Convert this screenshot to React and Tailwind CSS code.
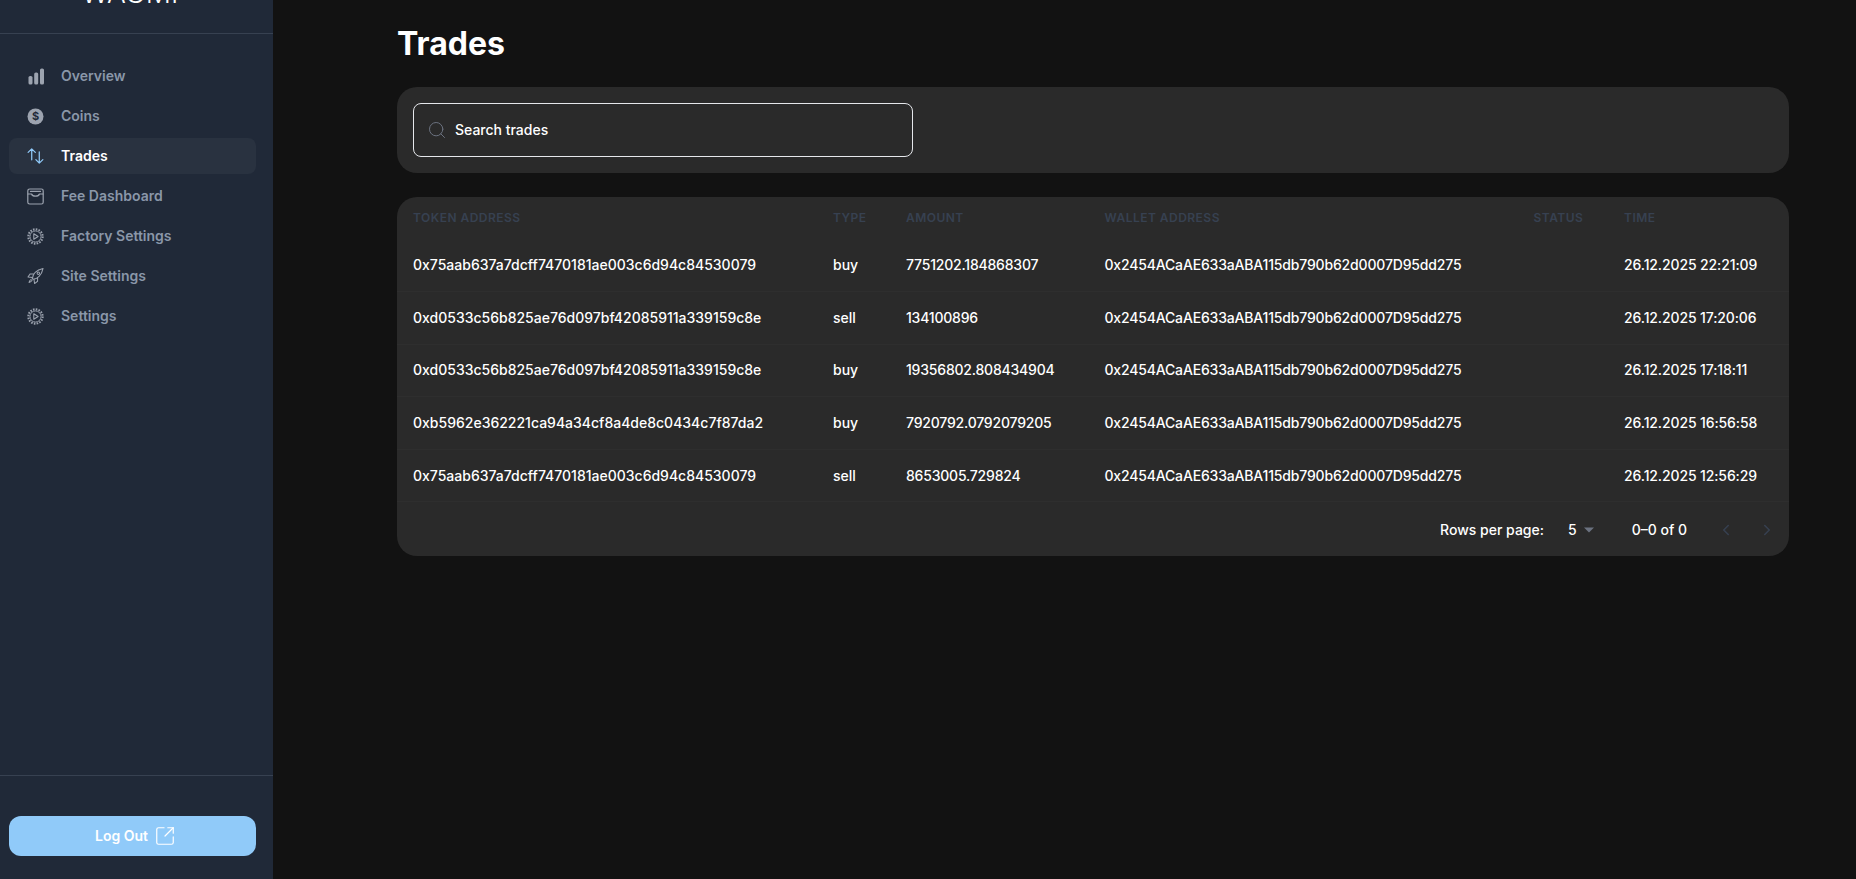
import { Search, SquareArrowOutUpRight, ChevronLeft, ChevronRight } from "lucide-react";

const BarsIcon = () => (
  <svg width="16" height="17" viewBox="0 0 16 17" fill="currentColor">
    <rect x="0.5" y="8" width="4" height="8.5" rx="1.6" />
    <rect x="6.2" y="4.5" width="4" height="12" rx="1.6" />
    <rect x="12" y="0.5" width="4" height="16" rx="1.6" />
  </svg>
);

const CoinIcon = () => (
  <svg width="17" height="17" viewBox="0 0 17 17">
    <circle cx="8.5" cy="8.5" r="8" fill="currentColor" />
    <text x="8.5" y="12.4" textAnchor="middle" fontSize="11" fontWeight="700" fill="#202938" fontFamily="Inter, sans-serif">$</text>
  </svg>
);

const TradesIcon = () => (
  <svg width="18" height="18" viewBox="0 0 18 18" fill="none" stroke="currentColor" strokeWidth="1.3" strokeLinecap="round" strokeLinejoin="round">
    <path d="M5 13V1.5M1.2 5.2 5 1.5l3.8 3.7" />
    <path d="M13 4.5V16.5M9.4 12.8l3.6 3.7 3.8-3.7" />
  </svg>
);

const WalletIcon = () => (
  <svg width="17" height="17" viewBox="0 0 17 17" fill="none" stroke="currentColor" strokeWidth="1.2" strokeLinejoin="round" strokeLinecap="round">
    <rect x="0.8" y="1" width="15.4" height="15" rx="1.8" />
    <path d="M3.5 3.4h10" />
    <path d="M1 6h3.6c.4 1.4 1.7 2.2 3.9 2.2s3.5-.8 3.9-2.2H16" />
  </svg>
);

const GearPlayIcon = () => (
  <svg width="17" height="17" viewBox="0 0 17 17" fill="none" stroke="currentColor" strokeLinejoin="round">
    <circle cx="8.5" cy="8.5" r="7.2" strokeWidth="2" strokeDasharray="1.6 1.23" />
    <circle cx="8.5" cy="8.5" r="5.6" strokeWidth="1" />
    <path d="M6.8 5.8v5.4l4.3-2.7z" strokeWidth="1.1" />
  </svg>
);

const RocketIcon = () => (
  <svg width="18" height="18" viewBox="0 0 18 18" fill="none" stroke="currentColor" strokeWidth="1.1" strokeLinejoin="round" strokeLinecap="round">
    <path d="M5.6 11.9C6 7.6 9.6 2.8 17 1c-1.4 7.4-6.2 11-10.5 11.4z" />
    <path d="M7 6.8H3.4L1 10l4.6.6" />
    <path d="M11.2 11v3.6L8 17l-.6-4.6" />
    <path d="M4.4 12.6c-1.2.7-2 2-2.2 3.2 1.2-.2 2.5-1 3.2-2.2" />
    <circle cx="12" cy="6" r="1.3" />
  </svg>
);

const navItems = [
  { label: "Overview", icon: <BarsIcon /> },
  { label: "Coins", icon: <CoinIcon /> },
  { label: "Trades", icon: <TradesIcon />, active: true },
  { label: "Fee Dashboard", icon: <WalletIcon /> },
  { label: "Factory Settings", icon: <GearPlayIcon /> },
  { label: "Site Settings", icon: <RocketIcon /> },
  { label: "Settings", icon: <GearPlayIcon /> },
];

const trades = [
  ["0x75aab637a7dcff7470181ae003c6d94c84530079", "buy", "7751202.184868307", "26.12.2025 22:21:09"],
  ["0xd0533c56b825ae76d097bf42085911a339159c8e", "sell", "134100896", "26.12.2025 17:20:06"],
  ["0xd0533c56b825ae76d097bf42085911a339159c8e", "buy", "19356802.808434904", "26.12.2025 17:18:11"],
  ["0xb5962e362221ca94a34cf8a4de8c0434c7f87da2", "buy", "7920792.0792079205", "26.12.2025 16:56:58"],
  ["0x75aab637a7dcff7470181ae003c6d94c84530079", "sell", "8653005.729824", "26.12.2025 12:56:29"],
];

const wallet = "0x2454ACaAE633aABA115db790b62d0007D95dd275";

const Sidebar = () => (
  <aside className="flex h-screen w-[273px] shrink-0 flex-col bg-[#202938]">
    <div className="flex h-[34px] items-end justify-center overflow-hidden border-b border-[#374151] pr-[13px]">
      <div className="mb-[26px] text-[28px] font-light leading-none text-white">WAGMI</div>
    </div>
    <nav className="flex flex-col gap-1 pl-[9px] pr-[17px] pt-[24px]">
      {navItems.map((item) => (
        <a
          key={item.label}
          className={`flex h-9 items-center gap-[17px] rounded-lg pl-[18px] text-sm font-semibold ${
            item.active ? "bg-[#293240] text-white" : "text-[#8a97a9]"
          }`}
        >
          <span className={`flex w-[17px] items-center justify-center ${item.active ? "text-[#90caf9]" : "text-[#9ca3af]"}`}>
            {item.icon}
          </span>
          {item.label}
        </a>
      ))}
    </nav>
    <div className="mt-auto border-t border-[#374151] pb-[23px] pl-[9px] pr-[17px] pt-[40px]">
      <button className="flex h-10 w-full items-center justify-center gap-[6px] rounded-xl bg-[#90caf9] pl-[6px] text-sm font-semibold text-white">
        Log Out
        <SquareArrowOutUpRight size={22} strokeWidth={1.3} />
      </button>
    </div>
  </aside>
);

const Th = ({ children }) => (
  <th className="h-[42px] px-4 text-left text-xs font-semibold uppercase tracking-[0.04em] text-[#374151]">{children}</th>
);

const TradesTable = () => (
  <div className="mt-6 rounded-[20px] bg-[#2a2a2a]">
    <table className="w-full table-fixed border-collapse">
      <colgroup>
        <col className="w-[420px]" />
        <col className="w-[73px]" />
        <col className="w-[198.5px]" />
        <col className="w-[429px]" />
        <col className="w-[90.5px]" />
        <col className="w-[181px]" />
      </colgroup>
      <thead>
        <tr>
          <Th>Token Address</Th>
          <Th>Type</Th>
          <Th>Amount</Th>
          <Th>Wallet Address</Th>
          <Th>Status</Th>
          <Th>Time</Th>
        </tr>
      </thead>
      <tbody>
        {trades.map((row, i) => (
          <tr key={i} className="h-[52.6px] border-b border-[#2e2e2e] text-sm font-medium text-white">
            <td className="whitespace-nowrap px-4">{row[0]}</td>
            <td className="px-4">{row[1]}</td>
            <td className="whitespace-nowrap px-4 tracking-[-0.2px]">{row[2]}</td>
            <td className="whitespace-nowrap px-4 tracking-[-0.17px]">{wallet}</td>
            <td className="px-4"></td>
            <td className="whitespace-nowrap px-4 tracking-[-0.12px]">{row[3]}</td>
          </tr>
        ))}
      </tbody>
    </table>
    <div className="flex h-[54px] items-center justify-end pt-[2px] text-sm font-medium text-white">
      <span>Rows per page:</span>
      <span className="ml-6">5</span>
      <svg className="ml-[6px] text-[#6b7280]" width="12" height="6" viewBox="0 0 12 6" fill="currentColor">
        <path d="M1 0.5h10L6 5.5z" />
      </svg>
      <span className="ml-[37px]">0–0 of 0</span>
      <span className="ml-[30px] flex items-center gap-[23px] pr-[13px] text-[#374151]">
        <ChevronLeft size={18} />
        <ChevronRight size={18} />
      </span>
    </div>
  </div>
);

export default function App() {
  return (
    <div className="flex h-screen overflow-hidden bg-[#121212] font-['Inter',sans-serif]">
      <Sidebar />
      <main className="min-w-0 flex-1 pl-[124px] pr-[67px] pt-[24px]">
        <h1 className="text-[32px] font-bold leading-[40px] text-white">Trades</h1>
        <div className="mt-[23px] rounded-[20px] bg-[#2a2a2a] p-4">
          <div className="flex h-[54px] w-[500px] items-center gap-[8px] rounded-lg border border-[#e5e7eb] pl-[13px] text-sm font-medium text-white">
            <Search size={20} strokeWidth={1.2} className="text-[#6b7280]" />
            Search trades
          </div>
        </div>
        <TradesTable />
      </main>
    </div>
  );
}
